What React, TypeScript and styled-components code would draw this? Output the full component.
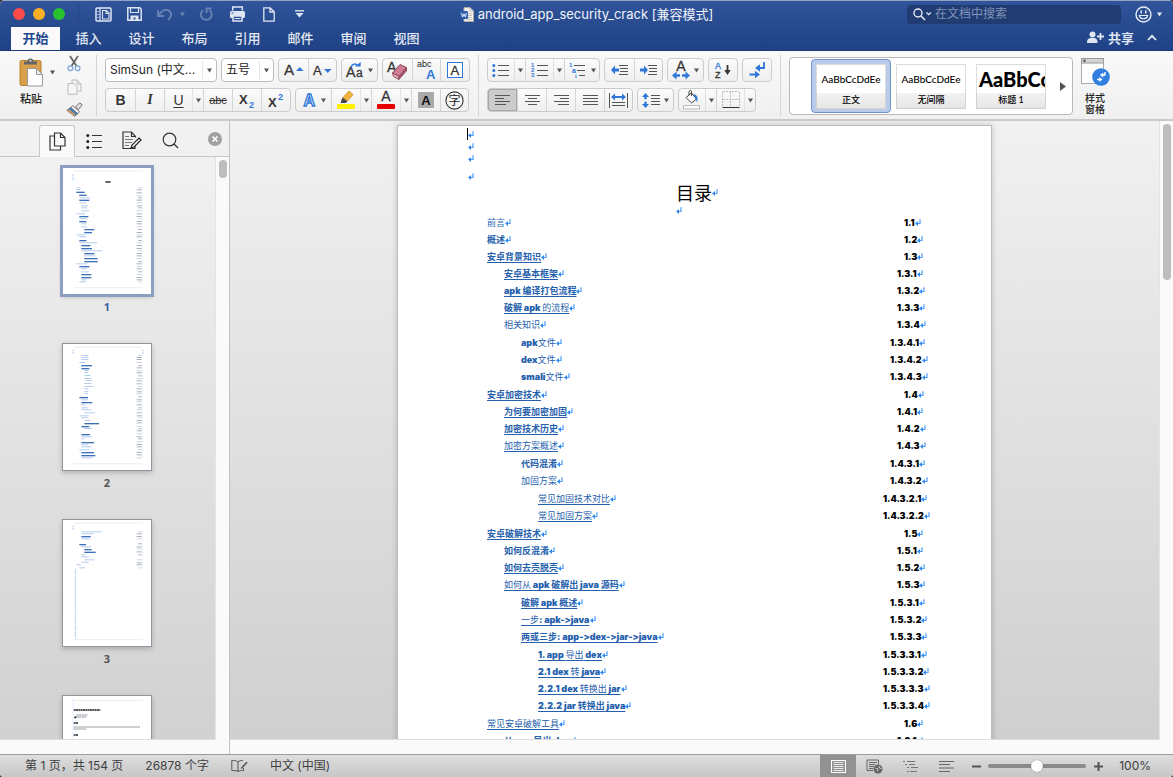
import React from 'react';
import styled, { createGlobalStyle, css } from 'styled-components';

const UI = `Inter, "Noto Sans CJK SC", sans-serif`;
const PREVIEW = `Lato, "Noto Sans CJK SC", sans-serif`;

const Global = createGlobalStyle`
  * { box-sizing: border-box; }
  body { margin: 0; font-family: ${UI}; font-size: 12px; color: #222; background: #3b3b3b; }
  button, input, select { font: inherit; color: inherit; margin: 0; padding: 0; border: 0; background: none; }
  svg { display: block; flex: none; }
`;

/* ---------- shell ---------- */
const Window = styled.div`
  height: 100vh;
  display: flex;
  flex-direction: column;
  overflow: hidden;
  border-radius: 5px 5px 4px 4px;
  background: #f9f9f9;
`;
const Header = styled.header`
  background: linear-gradient(#30549a, #284b8f 50%, #1f4186);
  border-top: 1px solid #8fa3c4;
  border-bottom: 1px solid #1a3876;
  color: #fff;
`;
const TitleBar = styled.div`
  display: grid;
  grid-template-columns: 1fr auto 1fr;
  align-items: center;
  height: 26px;
`;
const QuickBar = styled.div`
  display: flex;
  align-items: center;
  padding-left: 13px;
`;
const Light = styled.button<{ $c: string }>`
  width: 12px;
  height: 12px;
  margin-right: 8px;
  border-radius: 50%;
  background: ${p => p.$c};
`;
const BarLine = styled.span`
  width: 1px;
  height: 18px;
  margin: 0 15px 0 5px;
  background: #244484;
`;
const QuickButton = styled.button<{ $w: number; $dim?: boolean }>`
  width: ${p => p.$w}px;
  height: 20px;
  display: flex;
  align-items: center;
  justify-content: center;
  color: #dfe6f3;
  opacity: ${p => (p.$dim ? 0.35 : 1)};
`;
const DocTitle = styled.div`
  display: flex;
  align-items: center;
  gap: 4px;
  font-size: 13px;
  font-weight: 400;
  line-height: 16px;
  color: #f0f3f9;
`;
const TitleRight = styled.div`
  display: flex;
  align-items: center;
  justify-content: flex-end;
  gap: 14px;
  padding-right: 11px;
`;
const Search = styled.label`
  display: flex;
  align-items: center;
  gap: 3px;
  width: 214px;
  height: 19px;
  padding: 0 6px;
  border-radius: 4px;
  background: #203c72;
  input {
    flex: 1;
    min-width: 0;
    outline: 0;
    font-size: 12px;
    line-height: 16px;
  }
  input::placeholder { color: #8094bb; opacity: 1; }
`;
const FaceButton = styled.button`
  display: flex;
  align-items: center;
  gap: 5px;
  color: #e6ecf6;
`;
const TabRow = styled.div`
  display: flex;
  justify-content: space-between;
  align-items: flex-end;
  height: 23px;
  padding: 0 16px 0 11px;
`;
const Tabs = styled.nav`
  display: flex;
  gap: 4px;
`;
const Tab = styled.button<{ $on?: boolean }>`
  width: 49px;
  height: 23px;
  padding-bottom: 2px;
  font-size: 13px;
  font-weight: 500;
  line-height: 20px;
  color: ${p => (p.$on ? '#24478d' : '#e3e9f4')};
  ${p => p.$on && css`background: #fafafa; font-weight: 700;`}
`;
const ShareBox = styled.div`
  display: flex;
  align-items: center;
  gap: 13px;
  height: 23px;
  padding-bottom: 2px;
`;
const ShareButton = styled.button`
  display: flex;
  align-items: center;
  gap: 4px;
  color: #dfe6f3;
  font-size: 13px;
  font-weight: 700;
  line-height: 20px;
`;

/* ---------- ribbon ---------- */
const Ribbon = styled.div`
  display: flex;
  height: 70px;
  flex: none;
  padding-top: 6px;
  border-bottom: 2px solid #c9c9c9;
  background: linear-gradient(#f9f9f9, #f0f0f0);
  svg { color: #555; overflow: visible; }
`;
const Divider = styled.span`
  width: 1px;
  height: 61px;
  margin: -2px 8px 0;
  background: #d6d6d6;
`;
const PasteButton = styled.button`
  display: grid;
  grid-template-columns: 32px 10px;
  justify-items: center;
  align-items: center;
  align-content: start;
  margin-left: 15px;
  row-gap: 4px;
  font-size: 11px;
  font-weight: 500;
  line-height: 16px;
`;
const ClipColumn = styled.div`
  display: flex;
  flex-direction: column;
  justify-content: space-between;
  align-items: center;
  width: 28px;
  height: 62px;
  margin: -2px 0 0 3px;
`;
const BareButton = styled.button<{ $dim?: boolean }>`
  display: flex;
  align-items: center;
  justify-content: center;
  opacity: ${p => (p.$dim ? 0.35 : 1)};
`;
const Rows = styled.div`
  display: flex;
  flex-direction: column;
  gap: 6px;
  padding-top: 1px;
`;
const ToolRow = styled.div`
  display: flex;
  gap: 4px;
  height: 24px;
`;
const Group = styled.div`
  display: flex;
  border: 1px solid #cbcbcb;
  border-radius: 4px;
  background: linear-gradient(#fbfbfb, #efefef);
`;
const Tool = styled.button<{ $w?: number; $on?: boolean }>`
  width: ${p => p.$w ?? 29}px;
  display: flex;
  align-items: center;
  justify-content: center;
  gap: 4px;
  & + & { border-left: 1px solid #d5d5d5; }
  ${p => p.$on && css`background: #cbcbcb; box-shadow: inset 0 0 0 1px #a6a6a6; border-radius: 3px 0 0 3px;`}
`;
const ArrowTool = styled.button`
  width: 11px;
  display: flex;
  align-items: center;
  justify-content: center;
  border-left: 1px solid #e0e0e0;
  & + ${Tool} { border-left: 1px solid #d5d5d5; }
`;
const SelectBox = styled.div<{ $w: number }>`
  display: grid;
  width: ${p => p.$w}px;
  border: 1px solid #bdbdbd;
  border-radius: 4px;
  background: #fff;
  select, span { grid-area: 1 / 1; }
  select { appearance: none; padding-left: 4px; font-size: 12px; line-height: 20px; outline: 0; width: 100%; }
  span {
    justify-self: end;
    display: flex;
    align-items: center;
    justify-content: center;
    width: 14px;
    margin: 2px 0;
    border-left: 1px solid #e4e4e4;
    pointer-events: none;
  }
`;
const Letter = styled.span<{ $b?: boolean; $i?: boolean; $u?: boolean; $s?: boolean }>`
  font-family: ${p => (p.$i ? '"Liberation Serif", serif' : '"Liberation Sans", sans-serif')};
  font-size: ${p => (p.$s ? 11 : 14)}px;
  line-height: 16px;
  font-weight: ${p => (p.$b ? 700 : 400)};
  font-style: ${p => (p.$i ? 'italic' : 'normal')};
  text-decoration: ${p => (p.$u ? 'underline' : p.$s ? 'line-through' : 'none')};
  text-underline-offset: 2px;
  color: #333;
`;
const Gallery = styled.div`
  display: flex;
  align-items: center;
  flex: 0 1 284px;
  height: 58px;
  padding-left: 21px;
  border: 1px solid #b9b9b9;
  border-radius: 4px;
  background: #fff;
  overflow: hidden;
`;
const StyleCard = styled.button<{ $on?: boolean; $big?: boolean }>`
  flex: none;
  width: 80px;
  height: 54px;
  padding: 4px;
  border: 1px solid ${p => (p.$on ? '#6f93cc' : 'transparent')};
  border-radius: 4px;
  background: ${p => (p.$on ? '#b9cbe8' : 'transparent')};
  font-family: ${PREVIEW};
  color: #000;
  span {
    display: block;
    overflow: hidden;
    white-space: nowrap;
    border: 1px solid #dcdcdc;
    border-bottom: 0;
    height: 29px;
    line-height: 28px;
    font-size: ${p => (p.$big ? 20 : 10)}px;
    font-weight: ${p => (p.$big ? 900 : 500)};
    text-align: ${p => (p.$big ? 'left' : 'center')};
    padding-left: ${p => (p.$big ? 2 : 0)}px;
    background: #fff;
  }
  small {
    display: block;
    border: 1px solid #d2d2d2;
    border-top: 0;
    height: 16px;
    font-size: 9px;
    font-weight: 500;
    line-height: 14px;
    background: linear-gradient(#f2f2f2, #e6e6e6);
  }
`;
const MoreButton = styled.button`
  margin-left: 5px;
  padding: 4px;
`;
const PaneButton = styled.button`
  width: 44px;
  display: flex;
  flex-direction: column;
  align-items: center;
  gap: 5px;
  font-size: 10px;
  font-weight: 500;
  line-height: 11px;
`;

/* ---------- body ---------- */
const Body = styled.div`
  flex: 1;
  min-height: 0;
  display: flex;
`;
const Sidebar = styled.aside`
  width: 230px;
  flex: none;
  display: flex;
  flex-direction: column;
  border-right: 1px solid #c2c2c2;
`;
const SideTabs = styled.div`
  display: flex;
  align-items: flex-end;
  height: 36px;
  flex: none;
  padding: 0 7px 0 39px;
  background: #f1f1f1;
  border-bottom: 1px solid #c6c6c6;
`;
const SideTab = styled.button<{ $on?: boolean }>`
  width: ${p => (p.$on ? 36 : 38)}px;
  height: 31px;
  display: flex;
  align-items: center;
  justify-content: center;
  ${p =>
    p.$on &&
    css`
      height: 32px;
      margin-bottom: -1px;
      background: #fafafa;
      border: 1px solid #c9c9c9;
      border-bottom: 0;
      border-radius: 3px 3px 0 0;
    `}
`;
const CloseButton = styled.button`
  margin: 0 0 10px auto;
`;
const Scroller = styled.div`
  flex: 1;
  min-height: 0;
  display: flex;
`;
const canvas = css`
  flex: 1;
  min-width: 0;
  overflow: hidden;
  border-bottom: 1px solid #dedede;
`;
const ThumbList = styled.div`
  ${canvas}
  display: flex;
  flex-direction: column;
  align-items: center;
  padding: 10px 1px 0 0;
  background: linear-gradient(#f1f1f1, #d1d1d1);
`;
const ThumbButton = styled.button<{ $on?: boolean }>`
  display: flex;
  flex-direction: column;
  align-items: center;
  justify-content: flex-start;
  flex: none;
  width: 90px;
  height: 176px;
  font-family: "Open Sans", sans-serif;
  font-size: 11px;
  font-weight: 700;
  line-height: 24px;
  color: ${p => (p.$on ? '#3f5f9e' : '#555')};
  svg {
    background: #fff;
    outline: 1px solid #8e959e;
    outline-offset: -1px;
    box-shadow: 0 2px 5px rgba(0, 0, 0, 0.2);
    ${p => p.$on && css`outline: 3px solid #8d9fc1; outline-offset: -1px;`}
  }
`;
const Track = styled.div`
  width: 14px;
  flex: none;
  display: flex;
  justify-content: center;
  padding-top: 3px;
  border-left: 1px solid #e4e4e4;
  background: #fafafa;
`;
const Knob = styled.div<{ $h: number }>`
  width: 8px;
  height: ${p => p.$h}px;
  border-radius: 4px;
  background: #bdbdbd;
`;
const BottomTrack = styled.div`
  height: 14px;
  flex: none;
  background: #fafafa;
`;
const Editor = styled.main`
  flex: 1;
  min-width: 0;
  display: flex;
  flex-direction: column;
`;
const Desk = styled.div`
  ${canvas}
  display: flex;
  justify-content: center;
  align-items: flex-start;
  padding-top: 4px;
  background: linear-gradient(#f1f1f1, #cfcfcf);
`;
const Page = styled.article`
  width: 595px;
  flex: none;
  padding: 2px 64px 60px 69px;
  border: 1px solid #bcbcbc;
  background: #fff;
  box-shadow: 0 0 6px rgba(0, 0, 0, 0.2);
`;
const Blank = styled.div<{ $caret?: boolean }>`
  height: 12px;
  display: flex;
  align-items: center;
  border-left: 1px solid ${p => (p.$caret ? '#000' : 'transparent')};
`;
const Spacer = styled.div`
  height: 6px;
`;
const HeadingBlock = styled.section`
  display: grid;
  justify-content: center;
`;
const Heading = styled.h1`
  display: flex;
  align-items: center;
  margin: 0;
  font-family: "Noto Sans CJK SC", sans-serif;
  font-size: 18px;
  font-weight: 400;
  line-height: 20px;
  color: #000;
`;
const HeadMark = styled.div`
  height: 12px;
  display: flex;
  align-items: flex-end;
`;
const TocList = styled.ol<{ $depth: number }>`
  list-style: none;
  margin: 0;
  padding: ${p => (p.$depth === 1 ? '0 0 0 20px' : p.$depth === 2 ? '0 0 1px 17px' : '1px 0 0 17px')};
`;
const TocLine = styled.div`
  display: flex;
  justify-content: space-between;
  height: 17px;
  font-size: 9px;
  line-height: 17px;
  white-space: nowrap;
  font-feature-settings: "calt" 0, "liga" 0;
`;
const TocText = styled.span`
  display: flex;
  align-items: center;
`;
const TocLink = styled.a<{ $u: boolean }>`
  color: #2560ac;
  white-space: pre;
  text-decoration: ${p => (p.$u ? 'underline' : 'none')};
  text-decoration-thickness: 1px;
  text-underline-offset: 2px;
`;
const Run = styled.span<{ $w: number }>`
  font-weight: ${p => p.$w};
`;
const TocNumber = styled.span<{ $depth: number }>`
  display: flex;
  align-items: center;
  width: ${p => 16 + p.$depth * 7}px;
  font-weight: 900;
  color: #000;
`;

/* ---------- status bar ---------- */
const Status = styled.footer`
  display: flex;
  align-items: stretch;
  height: 23px;
  flex: none;
  border-top: 1px solid #9c9c9c;
  background: linear-gradient(#dedede, #c6c6c6);
  font-size: 12px;
  line-height: 22px;
  color: #404040;
`;
const StatusInfo = styled.div`
  display: flex;
  align-items: center;
  gap: 22px;
  padding-left: 25px;
`;
const StatusTools = styled.div`
  display: flex;
  align-items: center;
  margin-left: auto;
  padding-right: 22px;
`;
const ViewButton = styled.button<{ $on?: boolean }>`
  width: 36px;
  height: 22px;
  display: flex;
  align-items: center;
  justify-content: center;
  background: ${p => (p.$on ? '#929292' : 'transparent')};
`;
const ZoomButton = styled.button`
  width: 24px;
  display: flex;
  justify-content: center;
`;
const Slider = styled.input`
  appearance: none;
  width: 98px;
  height: 4px;
  border-radius: 2px;
  background: #8a8a8a;
  &::-webkit-slider-thumb {
    appearance: none;
    width: 12px;
    height: 12px;
    border-radius: 50%;
    background: #fff;
    box-shadow: 0 0 1px rgba(0, 0, 0, 0.6);
  }
`;
const Percent = styled.span`
  width: 41px;
  text-align: right;
`;

/* ---------- icons ---------- */
const Ico: React.FC<{ w: number; h: number; children: React.ReactNode }> = ({ w, h, children }) => (
  <svg width={w} height={h} viewBox={`0 0 ${w} ${h}`} fill="none" stroke="currentColor" aria-hidden="true">
    {children}
  </svg>
);
const Down = () => (
  <Ico w={5} h={5}>
    <path d="M0 0.5h5L2.5 4.5z" fill="currentColor" stroke="none" />
  </Ico>
);
const Mark = () => (
  <Ico w={6} h={7}>
    <path d="M5 0.3v4.2H2" stroke="#4a9bf8" strokeWidth="1.2" />
    <path d="M0 4.5L3 2v5z" fill="#3389f2" stroke="none" />
  </Ico>
);
const B = '#2f78d8';
const G = '#555';

const linesPath = (x: number, y: number, ws: number[], step: number) =>
  ws.map((w, i) => `M${x} ${y + i * step}h${w}`).join('');

const Glyph = ({ x, y, s, b, thin, c = '#333', children }: { x: number; y: number; s: number; b?: boolean; thin?: boolean; c?: string; children: React.ReactNode }) => (
  <text x={x} y={y} fontFamily="Liberation Sans, sans-serif" fontSize={s} fontWeight={b ? 700 : 400} fill={c} stroke={b || thin ? 'none' : c} strokeWidth=".3">
    {children}
  </text>
);

const ScissorsIcon = () => (
  <Ico w={14} h={17}>
    <path d="M3 1l6.5 10M11 1L4.5 11" stroke="#666" strokeWidth="1.8" />
    <circle cx="3.4" cy="13.2" r="2.4" stroke="#7aa6dd" strokeWidth="1.2" />
    <circle cx="10.6" cy="13.2" r="2.4" stroke="#7aa6dd" strokeWidth="1.2" />
  </Ico>
);
const CopyIcon = () => (
  <Ico w={15} h={16}>
    <path d="M5 4V1h5l4 4v7h-3M10 1v4h4" />
    <path d="M1 4.5h6l3 3v7.8H1z" fill="#fafafa" />
  </Ico>
);
const BrushIcon = () => (
  <Ico w={17} h={15}>
    <path d="M9.5 5L13.6.8l2.6 2L12.5 7.5z" fill="#ddd" stroke="#777" />
    <path d="M6.5 3.5l7 6-2 2.3L4.8 5.5z" fill="#eee" stroke="#777" />
    <path d="M4.5 5.5L.8 8.3l7.8 6 3-2.5z" fill="#3e7fc9" stroke="#555" strokeWidth=".6" />
    <path d="M.8 8.3l7.8 6 .8-2-6-4.8z" fill="#c9985a" stroke="none" />
  </Ico>
);
const PasteIcon = () => (
  <Ico w={25} h={30}>
    <rect x="1" y="3.5" width="21" height="25" rx="1.5" fill="#d9a04c" stroke="#bb822f" />
    <path d="M5 7.5V4.5h3.5a3 3 0 0 1 6 0H18v3z" fill="#666" stroke="none" />
    <circle cx="11.5" cy="3.8" r="1" fill="#ddd" stroke="none" />
    <path d="M8.5 11.5h9l6 6v11.5h-15z" fill="#fff" stroke="#999" />
    <path d="M17.5 11.5v6h6z" fill="#eee" stroke="#999" />
  </Ico>
);
const SizeIcon = ({ up }: { up?: boolean }) => (
  <Ico w={20} h={16}>
    <Glyph x={0} y={13} s={up ? 15 : 13}>A</Glyph>
    <path d={up ? 'M12 9l3.8-4 3.8 4z' : 'M11 7h7.6l-3.8 4z'} fill={B} stroke="none" />
  </Ico>
);
const CaseIcon = () => (
  <Ico w={18} h={17}>
    <Glyph x={0} y={15} s={14}>A</Glyph>
    <Glyph x={10} y={15} s={12}>a</Glyph>
    <path d="M5 5.5C6 1.5 10 1 11.5 4" stroke={B} strokeWidth="1.5" />
    <path d="M8.7 4.4h6V0z" fill={B} stroke="none" />
  </Ico>
);
const EraserIcon = () => (
  <Ico w={21} h={20}>
    <Glyph x={0} y={12} s={14}>A</Glyph>
    <path d="M5.5 13L13 4.5l6.5 3L12 16.5z" fill="#cf7c94" stroke="#8e4a5f" />
    <path d="M5.5 13l6.5 3.5v3L6.5 16.5z" fill="#e7b2c0" stroke="#8e4a5f" />
    <path d="M12 16.5l7.5-9v3.3L12 19.3z" fill="#a85a72" stroke="#8e4a5f" />
  </Ico>
);
const AbcIcon = () => (
  <Ico w={21} h={20}>
    <Glyph x={1} y={7} s={9} thin c="#222">abc</Glyph>
    <Glyph x={10} y={19} s={13} b c={B}>A</Glyph>
  </Ico>
);
const BoxAIcon = () => (
  <Ico w={16} h={16}>
    <rect x=".5" y=".5" width="15" height="15" fill="#fff" stroke={B} />
    <Glyph x={3.4} y={12.8} s={13}>A</Glyph>
  </Ico>
);
const EffectIcon = () => (
  <Ico w={15} h={17}>
    <text x="1.5" y="14" fontFamily="Liberation Sans, sans-serif" fontSize="16" fontWeight="700" fill="#fff" stroke="#2f78d8" strokeWidth="1.3">A</text>
  </Ico>
);
const HighlightIcon = () => (
  <Ico w={18} h={20}>
    <path d="M6 7.5l6-6.5 4 3.5-5.5 6.5z" fill="#f0b53f" stroke="#c68a1a" strokeWidth=".8" />
    <path d="M5.5 7.5l5 4-2 1.5H3.5z" fill="#444" stroke="none" />
    <rect x="0" y="14" width="18" height="5" rx="1" fill="#ffef00" stroke="none" />
  </Ico>
);
const FontColorIcon = () => (
  <Ico w={18} h={20}>
    <Glyph x={4.3} y={11} s={14}>A</Glyph>
    <rect x="0" y="14" width="18" height="5" rx="1" fill="#e80000" stroke="none" />
  </Ico>
);
const ShadeAIcon = () => (
  <Ico w={16} h={16}>
    <rect width="16" height="16" fill="#a9a9a9" stroke="none" />
    <Glyph x={3.2} y={12.8} s={13} b c="#111">A</Glyph>
  </Ico>
);
const CircleZiIcon = () => (
  <Ico w={19} h={19}>
    <circle cx="9.5" cy="9.5" r="8.6" stroke="#333" strokeWidth="1.1" />
    <text x="3.5" y="14" fontFamily="Noto Sans CJK SC, sans-serif" fontSize="12" fill="#222" stroke="none">字</text>
  </Ico>
);
const ScriptIcon = ({ sup }: { sup?: boolean }) => (
  <Ico w={16} h={17}>
    <Glyph x={0} y={sup ? 15 : 12} s={13} b>X</Glyph>
    <Glyph x={10} y={sup ? 8 : 16} s={9} b c={B}>2</Glyph>
  </Ico>
);
const BulletIcon = () => (
  <Ico w={18} h={14}>
    <path d={linesPath(6, 2.5, [11, 11, 11], 5)} stroke={G} />
    {[2.5, 7.5, 12.5].map(y => <circle key={y} cx="1.8" cy={y} r="1.5" fill={B} stroke="none" />)}
  </Ico>
);
const NumberIcon = () => (
  <Ico w={18} h={16}>
    <path d={linesPath(6, 3.5, [11, 11, 11], 5)} stroke={G} />
    {['1', '2', '3'].map((n, i) => (
      <Glyph key={n} x={0} y={5 + i * 5} s={6} b c={B}>{n}</Glyph>
    ))}
  </Ico>
);
const MultiIcon = () => (
  <Ico w={18} h={16}>
    <path d="M5 3.5h11M8 8.5h8M10 13.5h6" stroke={G} />
    <Glyph x={0} y={5} s={6} b c={B}>1</Glyph>
    <Glyph x={3} y={11} s={7} b c={B}>a</Glyph>
    <Glyph x={6} y={16} s={6} b c={B}>i</Glyph>
  </Ico>
);
const IndentIcon = ({ right }: { right?: boolean }) => (
  <Ico w={18} h={12}>
    <path d="M8 1.5h9M9 4.5h8M9 7.5h8M8 10.5h9" stroke={G} />
    <path d={right ? 'M8 6L4 1.5v3H0v3h4v3z' : 'M0 6l4-4.5v3h4v3H4v3z'} fill={B} stroke="none" />
  </Ico>
);
const ScaleIcon = () => (
  <Ico w={18} h={20}>
    <Glyph x={4.2} y={11} s={14}>A</Glyph>
    <path d="M0 15.5l4.5-4v2.8h3.5v2.4H4.500v2.800zM18 15.5l-4.5-4v2.8H10v2.4h3.5v2.8z" fill={B} stroke="none" />
  </Ico>
);
const SortIcon = () => (
  <Ico w={16} h={18}>
    <Glyph x={0} y={8} s={9} c={B}>A</Glyph>
    <Glyph x={0} y={17} s={9}>Z</Glyph>
    <path d="M12.5 4v7" stroke="#333" strokeWidth="1.8" />
    <path d="M9.3 9h6.4l-3.2 5z" fill="#333" stroke="none" />
  </Ico>
);
const MarksIcon = () => (
  <Ico w={17} h={18}>
    <path d="M15 1v6h-4M.5 13.5H7" stroke={B} strokeWidth="1.8" />
    <path d="M6 7l5-3.8v7.6zM11 13.5L6 9.700v7.600z" fill={B} stroke="none" />
  </Ico>
);
const AlignIcon = ({ mode }: { mode: 'l' | 'c' | 'r' | 'j' }) => {
  const ws = mode === 'j' ? [15, 15, 15, 15] : mode === 'c' ? [15, 9, 15, 9] : [15, 9, 15, 11];
  const d = ws
    .map((w, i) => `M${mode === 'r' ? 15 - w : mode === 'c' ? (15 - w) / 2 : 0} ${1.5 + i * 3}h${w}`)
    .join('');
  return <Ico w={15} h={12}><path d={d} stroke={G} /></Ico>;
};
const DistributeIcon = () => (
  <Ico w={19} h={15}>
    <path d="M.5 0v15M18.5 0v15M3 9.5h13M3 12.5h13" stroke={G} />
    <path d="M2 4l4-3.6v2.6h7V.4L17 4l-4 3.6V5H6v2.6z" fill={B} stroke="none" />
  </Ico>
);
const SpacingIcon = () => (
  <Ico w={18} h={15}>
    <path d="M9 2.5h9M9 5.5h9M9 8.5h9M9 11.5h9" stroke={G} />
    <path d="M3.5 0L7 4H4.7v2.3H2.3V4H0zM3.5 15L7 11H4.7V8.7H2.3V11H0z" fill={B} stroke="none" />
  </Ico>
);
const BucketIcon = () => (
  <Ico w={18} h={20}>
    <path d="M3 7.5L8.5 3l5 6-5 4z" fill="#fff" stroke="#444" />
    <path d="M8.5 6V1.5C8.5 0 6 0 6 2v3" stroke="#444" />
    <path d="M10.5 4c4 1 5 4 3.5 8.5-.8-2.5-.5-3-1.5-3.5z" fill={B} stroke="none" />
    <rect x=".5" y="15.5" width="16" height="3.5" fill="#fafafa" stroke="#bbb" />
  </Ico>
);
const BorderIcon = () => (
  <Ico w={18} h={18}>
    <path d="M1 .5h16M.5 1v15M17.5 1v15M8.5 1v15M1 8.5h16" stroke="#bbb" strokeDasharray="2 1" />
    <path d="M.5 16.5h17" stroke="#333" />
  </Ico>
);
const PaneIcon = () => (
  <Ico w={30} h={31}>
    <rect x="1.5" y="1.5" width="22" height="25" fill="#fdfdfd" stroke="#aaa" />
    <rect x="1.5" y="1.5" width="22" height="4.5" fill="#d4d4d4" stroke="#999" />
    <circle cx="4.5" cy="3.7" r="1.3" fill="#555" stroke="none" />
    <circle cx="21" cy="20" r="8.8" fill="#2f7ee0" stroke="none" />
    <path d="M25 15v3h-2.5M17 22.5h3" stroke="#fff" strokeWidth="1.4" />
    <path d="M20 18l3.2-2.500v5zM22.5 22.5L19.3 20v5z" fill="#fff" stroke="none" />
  </Ico>
);

/* ---------- thumbnails: [x, y, width, weight] in a 270 x 384 page ---------- */
type Bar = [number, number, number, number];
const thumbs: { bars: Bar[]; nums: number[]; extra?: string }[] = [
  {
    bars: [
      [43, 61, 12, 0], [43, 66, 12, 0], [43, 74, 25, 1], [52, 83, 22, 1], [52, 91, 33, 0], [52, 98, 30, 1], [52, 106, 20, 0],
      [58, 115, 20, 0], [58, 121, 17, 0], [58, 130, 23, 0], [43, 139, 27, 0], [52, 147, 27, 1], [52, 154, 24, 0], [52, 162, 21, 1],
      [58, 169, 17, 0], [58, 178, 17, 0], [67, 186, 30, 1], [67, 195, 23, 1], [43, 202, 27, 0], [52, 208, 21, 0], [52, 219, 21, 1],
      [52, 226, 53, 0], [58, 234, 27, 1], [58, 243, 32, 1], [58, 250, 62, 0], [67, 258, 30, 1], [67, 265, 33, 0], [67, 273, 40, 1],
      [67, 282, 40, 1], [43, 289, 33, 0], [52, 297, 30, 1], [58, 304, 17, 0], [58, 313, 22, 0], [58, 321, 30, 1], [58, 330, 30, 1],
      [58, 337, 16, 0], [52, 343, 20, 0],
    ],
    nums: [61, 67, 76, 85, 91, 98, 106, 115, 121, 130, 139, 147, 154, 162, 169, 178, 186, 195, 202, 208, 219, 226, 234, 243, 250, 258, 265, 273, 282, 289, 297, 304, 313, 321, 330, 337, 343],
    extra: 'M33 22v18',
  },
  {
    bars: [
      [58, 36, 21, 0], [58, 42, 21, 0], [58, 48, 21, 0], [52, 57, 18, 0], [58, 66, 32, 1], [58, 75, 24, 1], [67, 81, 13, 0],
      [67, 87, 11, 0], [67, 96, 18, 0], [67, 105, 21, 0], [72, 111, 18, 0], [67, 120, 21, 0], [67, 129, 27, 0], [67, 136, 12, 0],
      [67, 144, 12, 0], [67, 150, 12, 0], [52, 162, 26, 1], [58, 169, 20, 0], [58, 177, 33, 1], [58, 184, 12, 0], [58, 193, 20, 0],
      [58, 199, 30, 0], [67, 208, 33, 0], [52, 217, 28, 0], [58, 223, 22, 0], [67, 231, 18, 0], [67, 240, 44, 1], [58, 249, 24, 1],
      [67, 255, 24, 0], [58, 273, 26, 1], [58, 280, 32, 0], [58, 286, 10, 0], [58, 297, 38, 1], [58, 304, 20, 0], [58, 310, 30, 0],
      [52, 319, 30, 0], [58, 327, 38, 1], [58, 336, 42, 1], [58, 343, 34, 0],
    ],
    nums: [36, 42, 48, 57, 66, 73, 82, 88, 97, 105, 112, 121, 129, 136, 145, 151, 160, 169, 175, 184, 193, 199, 208, 217, 223, 231, 238, 249, 256, 262, 271, 280, 286, 295, 303, 310, 318, 327, 334, 343],
    extra: 'M33 20v13M243 20v13',
  },
  {
    bars: [
      [58, 37, 62, 0], [58, 43, 36, 0], [58, 51, 28, 1], [58, 58, 26, 0], [52, 75, 20, 1], [58, 82, 30, 0], [67, 90, 22, 1],
      [67, 98, 34, 1], [58, 106, 12, 0], [58, 112, 24, 0], [67, 121, 30, 0], [58, 128, 22, 0], [43, 136, 14, 0], [52, 145, 18, 0],
    ],
    nums: [37, 43, 51, 58, 73, 82, 88, 97, 106, 121, 130, 136, 145],
    extra: 'M33 20v13M40 150v210',
  },
  {
    bars: [],
    nums: [],
    extra: 'M43 60h34M43 66h30M35 96h200M35 102h38',
  },
];

const Thumb = ({ n }: { n: number }) => {
  const t = thumbs[n];
  const last = n === 3;
  return (
    <svg width="90" height="128" viewBox="0 0 270 384" aria-hidden="true">
      <path d={last ? 'M34 16h208' : 'M34 12h208M34 362h208'} stroke="#e4e4e4" strokeWidth="2" />
      {t.bars.map(([x, y, w, b], i) => (
        <rect key={i} x={x} y={y} width={w} height={b ? 4 : 3} fill={b ? '#3c70b8' : '#b3cdec'} />
      ))}
      {t.nums.map((y, i) => (
        <rect key={i} x={i % 4 === 0 ? 229 : 224} y={y} width={i % 4 === 0 ? 10 : 15} height="3" fill={i % 3 ? '#a9adb3' : '#ccd2da'} />
      ))}
      {n < 2 && <path d="M241 60v290" stroke="#c9dff7" strokeWidth="2" strokeDasharray="4 5" />}
      {n === 2 && <path d="M241 37v112" stroke="#c9dff7" strokeWidth="2" strokeDasharray="4 5" />}
      <path d={t.extra} stroke={last ? '#8d949c' : '#9ec6f2'} strokeWidth="3" strokeDasharray={last ? '7 1' : '5 2'} />
      {n === 0 && <path d="M130 45h16" stroke="#333" strokeWidth="5" />}
      {last && <path d="M35 45h80M35 84h14M35 120h14M37 67h6" stroke="#222" strokeWidth="5" strokeDasharray="6 1" />}
      {last && <path d="M33 10v120" stroke="#b8d6f6" strokeWidth="2" strokeDasharray="4 3" />}
    </svg>
  );
};

/* ---------- table of contents; *…* marks bold Chinese runs ---------- */
type Entry = { no: string; text: string; u?: boolean; kids?: Entry[] };
const toc: Entry[] = [
  { no: '1.1', text: '前言' },
  { no: '1.2', text: '*概述*' },
  {
    no: '1.3', text: '*安卓背景知识*', u: true, kids: [
      { no: '1.3.1', text: '*安卓基本框架*', u: true },
      { no: '1.3.2', text: 'apk *编译打包流程*', u: true },
      { no: '1.3.3', text: '*破解* apk 的流程', u: true },
      { no: '1.3.4', text: '相关知识', kids: [
        { no: '1.3.4.1', text: 'apk文件' },
        { no: '1.3.4.2', text: 'dex文件' },
        { no: '1.3.4.3', text: 'smali文件' },
      ] },
    ],
  },
  {
    no: '1.4', text: '*安卓加密技术*', u: true, kids: [
      { no: '1.4.1', text: '*为何要加密加固*', u: true },
      { no: '1.4.2', text: '*加密技术历史*', u: true },
      { no: '1.4.3', text: '加密方案概述', u: true, kids: [
        { no: '1.4.3.1', text: '*代码混淆*' },
        { no: '1.4.3.2', text: '加固方案', kids: [
          { no: '1.4.3.2.1', text: '常见加固技术对比', u: true },
          { no: '1.4.3.2.2', text: '常见加固方案', u: true },
        ] },
      ] },
    ],
  },
  {
    no: '1.5', text: '*安卓破解技术*', u: true, kids: [
      { no: '1.5.1', text: '*如何反混淆*' },
      { no: '1.5.2', text: '*如何去壳脱壳*', u: true },
      { no: '1.5.3', text: '如何从 apk *破解出* java *源码*', u: true, kids: [
        { no: '1.5.3.1', text: '*破解* apk *概述*', u: true },
        { no: '1.5.3.2', text: '一步: apk->java', u: true },
        { no: '1.5.3.3', text: '*两或三步*: app->dex->jar->java', u: true, kids: [
          { no: '1.5.3.3.1', text: '1. app 导出 dex', u: true },
          { no: '1.5.3.3.2', text: '2.1 dex 转 java', u: true },
          { no: '1.5.3.3.3', text: '2.2.1 dex 转换出 jar', u: true },
          { no: '1.5.3.3.4', text: '2.2.2 jar *转换出* java', u: true },
        ] },
      ] },
    ],
  },
  { no: '1.6', text: '常见安卓破解工具', u: true, kids: [{ no: '1.6.1', text: '*从* app *导出* dex', u: true }] },
];

const runs = (text: string) => {
  let bold = false;
  return text
    .split(/(\*|[\u4e00-\u9fff]+)/)
    .filter(Boolean)
    .flatMap((part, i) => {
      if (part === '*') {
        bold = !bold;
        return [];
      }
      const cjk = /[\u4e00-\u9fff]/.test(part);
      return [<Run key={i} $w={cjk ? (bold ? 700 : 400) : 900}>{part}</Run>];
    });
};

const Toc = ({ items, depth }: { items: Entry[]; depth: number }) => (
  <TocList $depth={depth}>
    {items.map(e => (
      <li key={e.no}>
        <TocLine>
          <TocText>
            <TocLink href={`#${e.no}`} $u={!!e.u}>{runs(e.text)}</TocLink>
            <Mark />
          </TocText>
          <TocNumber $depth={depth}>{e.no}<Mark /></TocNumber>
        </TocLine>
        {e.kids && <Toc items={e.kids} depth={depth + 1} />}
      </li>
    ))}
  </TocList>
);

const tabs = ['开始', '插入', '设计', '布局', '引用', '邮件', '审阅', '视图'];

const MenuTool = ({ label, children }: { label: string; children: React.ReactNode }) => (
  <Tool $w={35} aria-label={label}>{children}<Down /></Tool>
);

export default function App() {
  return (
    <Window>
      <Global />
      <Header>
        <TitleBar>
          <QuickBar>
            <Light $c="#fc4b48" aria-label="关闭" />
            <Light $c="#fdb024" aria-label="最小化" />
            <Light $c="#28c231" aria-label="全屏" />
            <BarLine />
            <QuickButton $w={18} aria-label="模板">
              <Ico w={17} h={15}>
                <rect x="1" y="1" width="15" height="13" rx="1" strokeWidth="1.5" />
                <path d="M5 1v13M3 4v1M3 7v1M3 10v1" strokeWidth="1.2" />
                <path d="M7.5 3.5h4l2.5 2.5v6h-6.5zM11 3.5v3h3" strokeWidth="1.1" />
              </Ico>
            </QuickButton>
            <QuickButton $w={44} aria-label="保存">
              <Ico w={15} h={14}>
                <path d="M.8.8h12l1.4 1.4v11H.8z" strokeWidth="1.5" />
                <path d="M3.5 1v4.5h8V1" strokeWidth="1.2" />
                <path d="M3.5 8.5h8V13h-3v-2.5h-2V13h-3z" fill="currentColor" stroke="none" />
              </Ico>
            </QuickButton>
            <QuickButton $w={18} $dim aria-label="撤消">
              <Ico w={16} h={13}>
                <path d="M1 2v6h6" strokeWidth="1.8" />
                <path d="M1.5 7.5C5 2 9 .5 12.5 3c3 3 1.5 6.5-1.5 9" strokeWidth="1.8" />
              </Ico>
            </QuickButton>
            <QuickButton $w={16} $dim aria-label="撤消选项"><Down /></QuickButton>
            <QuickButton $w={31} $dim aria-label="重复">
              <Ico w={14} h={14}>
                <path d="M4 3.2A5.4 5.4 0 1 0 10.5 3.2" strokeWidth="1.8" />
                <path d="M7.5 6V1.5h5" strokeWidth="1.8" />
              </Ico>
            </QuickButton>
            <QuickButton $w={32} aria-label="打印">
              <Ico w={17} h={16}>
                <path d="M3.7 4.5V1h9.6v3.5" strokeWidth="1.5" />
                <rect x="1" y="5" width="15" height="7" rx="1.5" fill="currentColor" stroke="none" />
                <path d="M4 10h9v5H4z" fill="#2a4c91" strokeWidth="1.5" />
                <path d="M5.5 12.5h6" />
                <path d="M2.5 7h2" stroke="#2a4c91" />
              </Ico>
            </QuickButton>
            <QuickButton $w={31} aria-label="新建">
              <Ico w={12} h={15}>
                <path d="M.8.8h6.4l4 4v9.4H.8zM7 .8v4.2h4.2" strokeWidth="1.3" />
              </Ico>
            </QuickButton>
            <QuickButton $w={31} aria-label="自定义">
              <Ico w={9} h={8}>
                <path d="M0 .8h9" strokeWidth="1.4" />
                <path d="M.5 3h8l-4 4.5z" fill="currentColor" stroke="none" />
              </Ico>
            </QuickButton>
          </QuickBar>
          <DocTitle>
            <Ico w={14} h={15}>
              <path d="M4 .5h6l3.5 3.5v10.5H4z" fill="#f3f1ea" stroke="#aaa" />
              <path d="M10 .5V4h3.5M7 6.5h5M7 8.5h5M7 10.5h5M7 12.5h5" stroke="#aaa" strokeWidth=".7" />
              <rect x="0" y="4" width="8" height="8" rx="1" fill="#2f5fb0" stroke="none" />
              <path d="M1.5 6l1.2 4L4 6.8 5.3 10l1.2-4" stroke="#fff" strokeWidth=".9" />
            </Ico>
            android_app_security_crack [兼容模式]
          </DocTitle>
          <TitleRight>
            <Search>
              <Ico w={19} h={13}>
                <circle cx="5" cy="5" r="4" stroke="#e6ecf6" strokeWidth="1.4" />
                <path d="M8 8l4 4" stroke="#e6ecf6" strokeWidth="1.6" />
                <path d="M13.5 4.5l2.2 2.2 2.2-2.2" stroke="#e6ecf6" strokeWidth="1.3" />
              </Ico>
              <input type="search" placeholder="在文档中搜索" aria-label="在文档中搜索" />
            </Search>
            <FaceButton aria-label="反馈">
              <Ico w={17} h={17}>
                <circle cx="8.5" cy="8.5" r="7.5" strokeWidth="1.4" />
                <path d="M4.3 9.5c1 4.3 7.4 4.3 8.4 0z" strokeWidth="1.2" />
                <path d="M6.2 4.5v3M10.8 4.5v3" strokeWidth="1.5" />
              </Ico>
              <Down />
            </FaceButton>
          </TitleRight>
        </TitleBar>
        <TabRow>
          <Tabs>{tabs.map((t, i) => <Tab key={t} $on={i === 0}>{t}</Tab>)}</Tabs>
          <ShareBox>
            <ShareButton>
              <Ico w={17} h={13}>
                <circle cx="5.5" cy="3.5" r="3" fill="currentColor" stroke="none" />
                <path d="M0 12c0-5 2.5-5 5.5-5s5 0 5 5z" fill="currentColor" stroke="none" />
                <path d="M13.5 2v7M10 5.5h7" strokeWidth="1.8" />
              </Ico>
              共享
            </ShareButton>
            <BareButton aria-label="折叠功能区">
              <Ico w={10} h={7}><path d="M1 6l4-4.2L9 6" stroke="#e6ecf6" strokeWidth="1.8" /></Ico>
            </BareButton>
          </ShareBox>
        </TabRow>
      </Header>

      <Ribbon>
        <PasteButton><PasteIcon /><Down />粘贴</PasteButton>
        <ClipColumn>
          <BareButton aria-label="剪切"><ScissorsIcon /></BareButton>
          <BareButton $dim aria-label="复制"><CopyIcon /></BareButton>
          <BareButton aria-label="格式刷"><BrushIcon /></BareButton>
        </ClipColumn>
        <Divider />
        <Rows>
          <ToolRow>
            <SelectBox $w={112}><select aria-label="字体"><option>SimSun (中文...</option></select><span><Down /></span></SelectBox>
            <SelectBox $w={53}><select aria-label="字号"><option>五号</option></select><span><Down /></span></SelectBox>
            <Group>
              <Tool aria-label="增大字号"><SizeIcon up /></Tool>
              <Tool $w={28} aria-label="减小字号"><SizeIcon /></Tool>
            </Group>
            <Group><MenuTool label="更改大小写"><CaseIcon /></MenuTool></Group>
            <Group>
              <Tool aria-label="清除格式"><EraserIcon /></Tool>
              <Tool $w={28} aria-label="拼音指南"><AbcIcon /></Tool>
              <Tool aria-label="字符边框"><BoxAIcon /></Tool>
            </Group>
          </ToolRow>
          <ToolRow>
            <Group>
              <Tool aria-label="加粗"><Letter $b>B</Letter></Tool>
              <Tool aria-label="倾斜"><Letter $b $i>I</Letter></Tool>
              <Tool $w={28} aria-label="下划线"><Letter $u>U</Letter></Tool>
              <ArrowTool aria-label="下划线选项"><Down /></ArrowTool>
              <Tool aria-label="删除线"><Letter $s>abc</Letter></Tool>
              <Tool aria-label="下标"><ScriptIcon /></Tool>
              <Tool aria-label="上标"><ScriptIcon sup /></Tool>
            </Group>
            <Group>
              <MenuTool label="文本效果"><EffectIcon /></MenuTool>
              <Tool aria-label="突出显示"><HighlightIcon /></Tool>
              <ArrowTool aria-label="突出显示颜色"><Down /></ArrowTool>
              <Tool aria-label="字体颜色"><FontColorIcon /></Tool>
              <ArrowTool aria-label="字体颜色选项"><Down /></ArrowTool>
              <Tool aria-label="字符底纹"><ShadeAIcon /></Tool>
              <Tool $w={28} aria-label="带圈字符"><CircleZiIcon /></Tool>
            </Group>
          </ToolRow>
        </Rows>
        <Divider />
        <Rows>
          <ToolRow>
            <Group>
              <Tool $w={26} aria-label="项目符号"><BulletIcon /></Tool>
              <ArrowTool aria-label="项目符号库"><Down /></ArrowTool>
              <Tool $w={28} aria-label="编号"><NumberIcon /></Tool>
              <ArrowTool aria-label="编号库"><Down /></ArrowTool>
              <MenuTool label="多级列表"><MultiIcon /></MenuTool>
            </Group>
            <Group>
              <Tool aria-label="减少缩进"><IndentIcon /></Tool>
              <Tool $w={28} aria-label="增加缩进"><IndentIcon right /></Tool>
            </Group>
            <Group><MenuTool label="中文版式"><ScaleIcon /></MenuTool></Group>
            <Group><Tool $w={28} aria-label="排序"><SortIcon /></Tool></Group>
            <Group><Tool $w={28} aria-label="显示编辑标记"><MarksIcon /></Tool></Group>
          </ToolRow>
          <ToolRow>
            <Group>
              <Tool $on aria-label="左对齐"><AlignIcon mode="l" /></Tool>
              <Tool aria-label="居中"><AlignIcon mode="c" /></Tool>
              <Tool aria-label="右对齐"><AlignIcon mode="r" /></Tool>
              <Tool aria-label="两端对齐"><AlignIcon mode="j" /></Tool>
              <Tool $w={28} aria-label="分散对齐"><DistributeIcon /></Tool>
            </Group>
            <Group><MenuTool label="行距"><SpacingIcon /></MenuTool></Group>
            <Group>
              <Tool $w={26} aria-label="底纹"><BucketIcon /></Tool>
              <ArrowTool aria-label="底纹颜色"><Down /></ArrowTool>
              <Tool $w={28} aria-label="边框"><BorderIcon /></Tool>
              <ArrowTool aria-label="边框选项"><Down /></ArrowTool>
            </Group>
          </ToolRow>
        </Rows>
        <Divider />
        <Gallery>
          <StyleCard $on><span>AaBbCcDdEe</span><small>正文</small></StyleCard>
          <StyleCard><span>AaBbCcDdEe</span><small>无间隔</small></StyleCard>
          <StyleCard $big><span>AaBbCcDdEe</span><small>标题 1</small></StyleCard>
          <MoreButton aria-label="更多样式">
            <Ico w={6} h={9}><path d="M0 0l6 4.5L0 9z" fill="#555" stroke="none" /></Ico>
          </MoreButton>
        </Gallery>
        <PaneButton><PaneIcon /><span>样式<br />窗格</span></PaneButton>
      </Ribbon>

      <Body>
        <Sidebar>
          <SideTabs>
            <SideTab $on aria-label="缩略图">
              <Ico w={17} h={19}>
                <path d="M5.5 1h6l4.5 4.5V14H5.5zM11.5 1v4.5H16" stroke="#333" strokeWidth="1.2" />
                <path d="M5.5 4H1v14h10.5v-4" stroke="#333" strokeWidth="1.2" />
              </Ico>
            </SideTab>
            <SideTab aria-label="文档结构图">
              <Ico w={16} h={16}>
                <path d="M6 2.5h10M6 8.5h10M6 14.5h10" stroke="#333" strokeWidth="1.2" />
                {[2.5, 8.5, 14.5].map(y => <circle key={y} cx="1.8" cy={y} r="1.5" fill="#222" stroke="none" />)}
              </Ico>
            </SideTab>
            <SideTab aria-label="审阅">
              <Ico w={20} h={19}>
                <path d="M13 11.5V17.5H1V1h8.5l4 4.5v1M9.5 1v4.5H13" stroke="#333" strokeWidth="1.2" />
                <path d="M3 5.5h4M3 8.5h8M3 11.5h7M3 14.5h4" stroke="#777" />
                <path d="M17 7l2 2-7 7-3 1 1-3z" stroke="#222" strokeWidth="1.2" fill="#fff" />
              </Ico>
            </SideTab>
            <SideTab aria-label="查找">
              <Ico w={17} h={17}>
                <circle cx="7.5" cy="7.5" r="6.3" stroke="#333" strokeWidth="1.2" />
                <path d="M12 12l4 4" stroke="#333" strokeWidth="1.3" />
              </Ico>
            </SideTab>
            <CloseButton aria-label="关闭窗格">
              <Ico w={14} h={14}>
                <circle cx="7" cy="7" r="7" fill="#a0a0a0" stroke="none" />
                <path d="M4.5 4.5l5 5M9.5 4.5l-5 5" stroke="#fff" strokeWidth="1.7" />
              </Ico>
            </CloseButton>
          </SideTabs>
          <Scroller>
            <ThumbList>
              {thumbs.map((_, i) => (
                <ThumbButton key={i} $on={i === 0}>
                  <Thumb n={i} />
                  <span>{i + 1}</span>
                </ThumbButton>
              ))}
            </ThumbList>
            <Track><Knob $h={18} /></Track>
          </Scroller>
          <BottomTrack />
        </Sidebar>
        <Editor>
          <Scroller>
            <Desk>
              <Page>
                <Blank $caret><Mark /></Blank>
                <Blank><Mark /></Blank>
                <Blank><Mark /></Blank>
                <Spacer />
                <Blank><Mark /></Blank>
                <HeadingBlock>
                  <Heading>目录<Mark /></Heading>
                  <HeadMark><Mark /></HeadMark>
                </HeadingBlock>
                <Toc items={toc} depth={1} />
              </Page>
            </Desk>
            <Track><Knob $h={156} /></Track>
          </Scroller>
          <BottomTrack />
        </Editor>
      </Body>

      <Status>
        <StatusInfo>
          <span>第 1 页，共 154 页</span>
          <span>26878 个字</span>
          <BareButton aria-label="拼写检查">
            <Ico w={17} h={14}>
              <path d="M7 12.5C5 11.5 3 11.5.8 11.5V1.5C3 1.5 5 1.5 7 3zM7 3c1.5-1.5 2.5-1.5 5-1.5M7 12.5c1.5-1 3-1 5.5-1V9" stroke="#555" />
              <path d="M15.5 2.5l-5 5.5-1 2 2-.8 5-5.5z" fill="#555" stroke="none" />
            </Ico>
          </BareButton>
          <span>中文 (中国)</span>
        </StatusInfo>
        <StatusTools>
          <ViewButton $on aria-label="页面视图">
            <Ico w={15} h={13}>
              <rect x=".5" y=".5" width="14" height="12" stroke="#fff" />
              <path d="M2.5 2.5h10M2.5 4.5h10M2.5 6.5h10M2.5 8.5h10M2.5 10.5h10" stroke="#fff" strokeWidth=".8" />
            </Ico>
          </ViewButton>
          <ViewButton aria-label="Web 版式视图">
            <Ico w={17} h={15}>
              <path d="M7 11.5H1V1h11.5v4M3 3.5h8M3 5.5h6M3 7.5h5M3 9.5h4" stroke="#666" />
              <circle cx="12" cy="10" r="4.5" fill="#666" stroke="none" />
              <path d="M9.5 9l2.5 1-.5 2M13 7l.5 2 2 .5" stroke="#ddd" strokeWidth=".9" />
            </Ico>
          </ViewButton>
          <ViewButton aria-label="大纲视图">
            <Ico w={16} h={13}>
              <path d="M1 1.5h2M5 1.5h8M3 4.5h2M7 4.5h6M5 7.5h2M9 7.5h7M5 11.5h2M8 11.5h7" stroke="#777" />
            </Ico>
          </ViewButton>
          <ViewButton aria-label="草稿视图">
            <Ico w={15} h={13}><path d="M0 1.5h15M0 4.5h11M0 8h15M0 11.5h11" stroke="#666" strokeWidth="1.2" /></Ico>
          </ViewButton>
          <ZoomButton aria-label="缩小"><Ico w={9} h={9}><path d="M0 4.5h9" stroke="#555" strokeWidth="2" /></Ico></ZoomButton>
          <Slider type="range" min={0} max={200} defaultValue={100} aria-label="缩放" />
          <ZoomButton aria-label="放大"><Ico w={9} h={9}><path d="M0 4.5h9M4.5 0v9" stroke="#555" strokeWidth="2" /></Ico></ZoomButton>
          <Percent>100%</Percent>
        </StatusTools>
      </Status>
    </Window>
  );
}
